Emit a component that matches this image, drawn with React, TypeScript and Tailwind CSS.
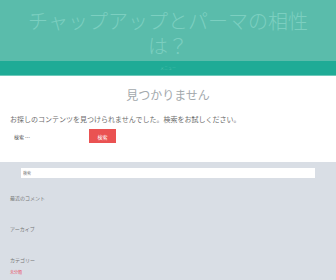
export default function App() {
  return (
    <div
      className="w-[336px] h-[280px] overflow-hidden bg-[#d9dee5]"
      style={{ fontFamily: '"Noto Sans CJK JP", "Noto Sans", sans-serif' }}
    >
      <header className="bg-[#5abcab] h-[61px] pt-[8px] px-[20px] overflow-hidden">
        <h1 className="text-center text-[20px] leading-[25px] font-light text-[#7ccfc0]">
          チャップアップとパーマの相性は？
        </h1>
      </header>
      <nav className="bg-[#1fab96] h-[15px] border-b border-[#6fcabb] flex items-center justify-center overflow-hidden">
        <span className="text-[4px] leading-[4px] text-[#4fc0ad]">メニュー</span>
      </nav>
      <main className="bg-white h-[86px] px-[10px] pt-[11px] overflow-hidden">
        <h2 className="text-center text-[12px] leading-[16px] text-[#a3a9ad]">見つかりません</h2>
        <p className="mt-[11px] text-[7px] leading-[10px] text-[#6d6d6d]">
          お探しのコンテンツを見つけられませんでした。検索をお試しください。
        </p>
        <form className="mt-[5px] flex items-center gap-[4px]">
          <input
            className="w-[75px] h-[14px] pl-[4px] text-[5px] leading-[5px] text-[#555] outline-none placeholder:text-[#555]"
            placeholder="検索 …"
          />
          <button
            type="button"
            className="w-[27px] h-[14px] bg-[#ea5252] text-white text-[5px] leading-[5px] flex items-center justify-center"
          >
            検索
          </button>
        </form>
      </main>
      <aside className="px-[10px] pt-[6px]">
        <div className="px-[11px]">
          <input
            className="block w-full h-[10px] bg-white pl-[2px] text-[4px] leading-[4px] outline-none placeholder:text-[#777]"
            placeholder="検索"
          />
        </div>
        <h3 className="mt-[16px] text-[5px] leading-[8px] text-[#777]">最近のコメント</h3>
        <h3 className="mt-[23px] text-[5px] leading-[8px] text-[#777]">アーカイブ</h3>
        <h3 className="mt-[23px] text-[5px] leading-[8px] text-[#777]">カテゴリー</h3>
        <a className="block mt-[5px] text-[4px] leading-[6px] text-[#e8536b]">未分類</a>
      </aside>
    </div>
  );
}
